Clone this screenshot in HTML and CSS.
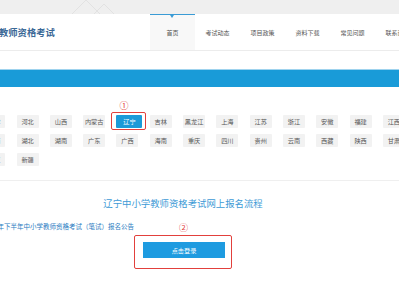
FILE: index.html
```html
<!DOCTYPE html>
<html lang="zh-CN">
<head>
  <meta charset="UTF-8" />
  <title>中小学教师资格考试</title>
  <link rel="stylesheet" href="styles.css">
</head>
<body>
  <div class="topbar">
    <svg class="topbar-deco" width="60" height="14" viewBox="0 0 60 14">
      <polyline points="0,14 14,0 28,14" fill="none" stroke="#e2e2e2" stroke-width="1" />
      <polyline points="22,14 32,4 42,14" fill="none" stroke="#e2e2e2" stroke-width="1" />
    </svg>
  </div>

  <div class="header">
    <div class="logo"><span>教师资格考试</span></div>
    <ul class="nav">
      <li class="active">首页</li>
      <li>考试动态</li>
      <li>项目政策</li>
      <li>资料下载</li>
      <li>常见问题</li>
      <li>联系我们</li>
    </ul>
  </div>

  <div class="banner"></div>

  <div class="provinces">
    <span class="cell"></span>
    <span class="tag">天津</span>
    <span class="tag">河北</span>
    <span class="tag">山西</span>
    <span class="tag">内蒙古</span>
    <span class="tag active"><i class="mark">①</i>辽宁</span>
    <span class="tag">吉林</span>
    <span class="tag">黑龙江</span>
    <span class="tag">上海</span>
    <span class="tag">江苏</span>
    <span class="tag">浙江</span>
    <span class="tag">安徽</span>
    <span class="tag">福建</span>
    <span class="tag">江西</span>
    <span class="cell"></span>
    <span class="tag">河南</span>
    <span class="tag">湖北</span>
    <span class="tag">湖南</span>
    <span class="tag">广东</span>
    <span class="tag">广西</span>
    <span class="tag">海南</span>
    <span class="tag">重庆</span>
    <span class="tag">四川</span>
    <span class="tag">贵州</span>
    <span class="tag">云南</span>
    <span class="tag">西藏</span>
    <span class="tag">陕西</span>
    <span class="tag">甘肃</span>
    <span class="cell"></span>
    <span class="tag">宁夏</span>
    <span class="tag">新疆</span>
  </div>

  <div class="main">
    <h2 class="title">辽宁中小学教师资格考试网上报名流程</h2>
    <p class="notice"><a href="#">2019年下半年中小学教师资格考试（笔试）报名公告</a></p>
    <div class="login-box">
      <i class="mark">②</i>
      <button class="login-btn">点击登录</button>
    </div>
  </div>
</body>
</html>
```

FILE: styles.css
```css
body {
  margin: 0;
  width: 399px;
  height: 300px;
  overflow: hidden;
  background: #fff;
  font-family: "Noto Sans CJK SC", "Noto Sans", sans-serif;
}
.topbar {
  height: 14px;
  background-color: #efefef;
}
.topbar-deco {
  display: block;
  margin-left: 72px;
}
.header {
  display: flex;
  height: 36px;
  border-bottom: 1px solid #ececec;
  overflow: hidden;
}
.logo {
  flex-shrink: 0;
  width: 150px;
  display: flex;
  align-items: center;
}
.logo span {
  margin-left: -1px;
  white-space: nowrap;
  font-size: 9.3px;
  font-weight: bold;
  color: #3a6896;
}
.nav {
  display: flex;
  flex-shrink: 0;
  margin: 0;
  padding: 0;
  list-style: none;
}
.nav li {
  width: 45px;
  display: flex;
  align-items: center;
  justify-content: center;
  font-size: 6px;
  color: #555;
  white-space: nowrap;
}
.nav li.active {
  position: relative;
  background-color: #f8f8f8;
  border-top: 1.5px solid #3a9bd5;
  box-sizing: border-box;
}
.nav li.active::after {
  content: "";
  position: absolute;
  top: 0;
  left: 50%;
  margin-left: -2.5px;
  border-left: 2.5px solid transparent;
  border-right: 2.5px solid transparent;
  border-top: 3px solid #3a9bd5;
}
.banner {
  margin-top: 18px;
  height: 17px;
  background-color: #199bd8;
  border-top: 1px solid #9fd3ee;
}
.provinces {
  display: grid;
  grid-template-columns: repeat(14, 33.3px);
  row-gap: 6px;
  margin-left: -50px;
  padding: 28px 0 14px;
  border-bottom: 1px solid #efefef;
}
.tag {
  position: relative;
  width: 22px;
  height: 13px;
  line-height: 13px;
  text-align: center;
  font-size: 6.2px;
  color: #555;
  background-color: #f2f2f2;
  border-radius: 1px;
  white-space: nowrap;
}
.tag.active {
  width: 26px;
  color: #fff;
  background-color: #1c9ad8;
}
.tag.active::after {
  content: "";
  position: absolute;
  left: -5px;
  top: -3.5px;
  width: 33px;
  height: 16px;
  border: 1.5px solid #e2403c;
  border-radius: 2px;
}
.mark {
  position: absolute;
  font-style: normal;
  font-size: 9px;
  line-height: 10px;
  color: #e2403c;
}
.tag .mark {
  left: 3px;
  top: -14px;
}
.main {
  width: 366px;
}
.title {
  margin: 16px 0 0;
  text-align: center;
  font-size: 9.4px;
  line-height: 12px;
  font-weight: normal;
  color: #3d9ad6;
}
.notice {
  margin: 12px 0 0 -17px;
  font-size: 6.5px;
  line-height: 10px;
  white-space: nowrap;
}
.notice a {
  color: #2b7cc2;
  text-decoration: none;
}
.login-box {
  position: relative;
  width: 82px;
  margin: 4px 0 0 134px;
  padding: 6px 6px 10px 8px;
  border: 1.5px solid #e2403c;
  border-radius: 2px;
}
.login-box .mark {
  left: 44px;
  top: -13px;
}
.login-btn {
  display: block;
  width: 82px;
  height: 16px;
  padding: 0;
  border: none;
  background-color: #1e9be0;
  color: #fff;
  font-family: inherit;
  font-size: 6.2px;
}
```
